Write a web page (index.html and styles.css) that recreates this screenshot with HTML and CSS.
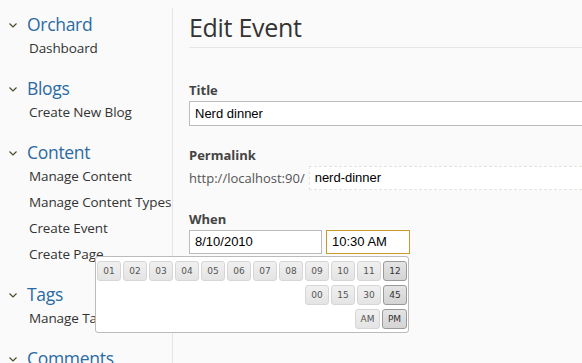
FILE: index.html
```html
<!DOCTYPE html>
<html>
<head>
<meta charset="utf-8">
<link rel="stylesheet" href="styles.css">
</head>
<body>
<div class="page">
  <nav class="sidebar">
    <section class="group">
      <h2 class="group-title"><svg class="chev" width="8" height="5" viewBox="0 0 8 5"><polyline points="0.5,0.5 4,4 7.5,0.5" fill="none" stroke="#4a4a2a" stroke-width="1.2"/></svg>Orchard</h2>
      <ul class="items"><li>Dashboard</li></ul>
    </section>
    <section class="group">
      <h2 class="group-title"><svg class="chev" width="8" height="5" viewBox="0 0 8 5"><polyline points="0.5,0.5 4,4 7.5,0.5" fill="none" stroke="#4a4a2a" stroke-width="1.2"/></svg>Blogs</h2>
      <ul class="items"><li>Create New Blog</li></ul>
    </section>
    <section class="group">
      <h2 class="group-title"><svg class="chev" width="8" height="5" viewBox="0 0 8 5"><polyline points="0.5,0.5 4,4 7.5,0.5" fill="none" stroke="#4a4a2a" stroke-width="1.2"/></svg>Content</h2>
      <ul class="items">
        <li>Manage Content</li>
        <li>Manage Content Types</li>
        <li>Create Event</li>
        <li>Create Page</li>
      </ul>
    </section>
    <section class="group">
      <h2 class="group-title"><svg class="chev" width="8" height="5" viewBox="0 0 8 5"><polyline points="0.5,0.5 4,4 7.5,0.5" fill="none" stroke="#4a4a2a" stroke-width="1.2"/></svg>Tags</h2>
      <ul class="items"><li>Manage Tags</li></ul>
    </section>
    <section class="group">
      <h2 class="group-title"><svg class="chev" width="8" height="5" viewBox="0 0 8 5"><polyline points="0.5,0.5 4,4 7.5,0.5" fill="none" stroke="#4a4a2a" stroke-width="1.2"/></svg>Comments</h2>
    </section>
  </nav>
  <main class="main">
    <h1 class="page-title">Edit Event</h1>
    <div class="field title-field">
      <label class="label">Title</label>
      <div class="text-input wide">Nerd dinner</div>
    </div>
    <div class="field">
      <label class="label">Permalink</label>
      <div class="permalink">
        <span class="prefix">http://localhost:90/</span>
        <div class="slug">nerd-dinner</div>
      </div>
    </div>
    <div class="field">
      <label class="label">When</label>
      <div class="when">
        <div class="text-input date">8/10/2010</div>
        <div class="text-input time">10:30 AM</div>
        <div class="picker">
          <div class="row">
            <span class="btn">01</span><span class="btn">02</span><span class="btn">03</span><span class="btn">04</span><span class="btn">05</span><span class="btn">06</span><span class="btn">07</span><span class="btn">08</span><span class="btn">09</span><span class="btn">10</span><span class="btn">11</span><span class="btn sel">12</span>
          </div>
          <div class="row">
            <span class="btn">00</span><span class="btn">15</span><span class="btn">30</span><span class="btn sel">45</span>
          </div>
          <div class="row">
            <span class="btn ampm">AM</span><span class="btn ampm sel">PM</span>
          </div>
        </div>
      </div>
    </div>
  </main>
</div>
</body>
</html>
```

FILE: styles.css
```css
html, body {
  margin: 0;
  padding: 0;
  background: #fafafa;
  height: 100%;
  overflow: hidden;
}
.page {
  display: flex;
  height: 100%;
  font-family: "Open Sans", "Noto Sans", sans-serif;
}
.sidebar {
  width: 173px;
  flex: none;
  margin-top: 8px;
  border-right: 1px solid #e6e6e6;
  padding-top: 5px;
  box-sizing: border-box;
}
.group {
  margin-bottom: 16px;
}
.group-title {
  margin: 0;
  font-weight: normal;
  font-size: 17.5px;
  line-height: 22px;
  color: #2a6aa3;
  display: flex;
  align-items: center;
  letter-spacing: -0.3px;
}
.chev {
  margin: 2px 10px 0 9px;
}
.items {
  list-style: none;
  margin: 0;
  padding: 0 0 0 29px;
}
.items li {
  font-size: 13.5px;
  line-height: 26px;
  color: #333;
  letter-spacing: -0.1px;
  white-space: nowrap;
}
.main {
  flex: 1;
  padding-left: 16px;
  min-width: 0;
}
.page-title {
  margin: 8px 0 0;
  font-weight: normal;
  font-size: 25px;
  line-height: 38px;
  color: #333;
  letter-spacing: -0.3px;
  padding-bottom: 1px;
  border-bottom: 1px solid #e6e6e6;
}
.field {
  margin-top: 34px;
}
.field + .field {
  margin-top: 21px;
}
.label {
  display: block;
  font-weight: bold;
  font-size: 13px;
  line-height: 16px;
  color: #444;
  margin-bottom: 3px;
}
.text-input {
  box-sizing: border-box;
  height: 25px;
  border: 1px solid #bcbcbc;
  background: #fff;
  font-family: "Liberation Sans", Arial, sans-serif;
  font-size: 13px;
  line-height: 23px;
  padding-left: 5px;
  color: #000;
}
.wide {
  width: 410px;
}
.permalink {
  display: flex;
  align-items: center;
}
.prefix {
  font-size: 13px;
  color: #555;
  margin-right: 4px;
}
.slug {
  box-sizing: border-box;
  height: 24px;
  width: 300px;
  border: 1px dashed #e4e4dc;
  border-right: none;
  background: #fff;
  font-family: "Liberation Sans", Arial, sans-serif;
  font-size: 13px;
  line-height: 22px;
  padding-left: 5px;
  color: #000;
}
.when {
  position: relative;
  display: flex;
  gap: 4px;
  margin-top: 1px;
}
.date {
  width: 133px;
  height: 24px;
  line-height: 22px;
}
.time {
  width: 84px;
  height: 24px;
  line-height: 22px;
  border-color: #c8982a;
}
.picker {
  position: absolute;
  left: -94px;
  top: 26px;
  width: 314px;
  box-sizing: border-box;
  border: 1px solid #bbb;
  border-radius: 3px;
  background: #fff;
  padding: 4px 1px 3px 1px;
  display: flex;
  flex-direction: column;
  gap: 4px;
}
.row {
  display: flex;
  justify-content: flex-end;
  gap: 2px;
}
.btn {
  box-sizing: border-box;
  width: 24px;
  height: 20px;
  border: 1px solid #d6d6d6;
  border-radius: 3px;
  background: linear-gradient(#f0f0f0, #e4e4e4);
  font-family: "DejaVu Sans", Verdana, sans-serif;
  font-size: 9px;
  line-height: 18px;
  text-align: center;
  color: #555;
}
.ampm {
  width: 25px;
}
.btn.sel {
  border-color: #9a9a9a;
  background: linear-gradient(#e4e4e4, #d4d4d4);
  color: #333;
}
```
